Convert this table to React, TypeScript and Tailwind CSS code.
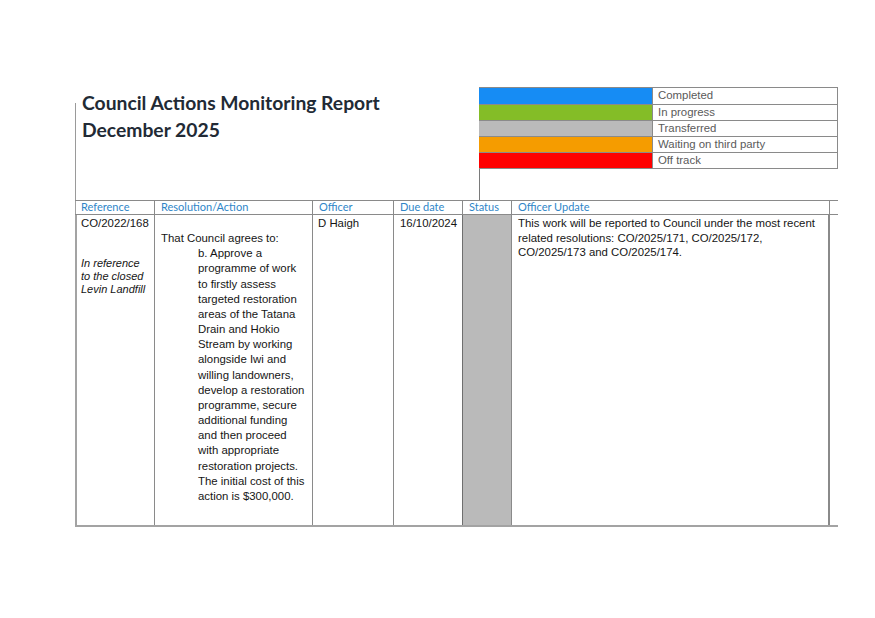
import React from 'react';

const legend = [
  { label: 'Completed', color: 'bg-[#168cf4]' },
  { label: 'In progress', color: 'bg-[#84bd27]' },
  { label: 'Transferred', color: 'bg-[#bababa]' },
  { label: 'Waiting on third party', color: 'bg-[#f59c00]' },
  { label: 'Off track', color: 'bg-[#ff0000]' },
];

const actionLines = [
  'b. Approve a',
  'programme of work',
  'to firstly assess',
  'targeted restoration',
  'areas of the Tatana',
  'Drain and Hokio',
  'Stream by working',
  'alongside Iwi and',
  'willing landowners,',
  'develop a restoration',
  'programme, secure',
  'additional funding',
  'and then proceed',
  'with appropriate',
  'restoration projects.',
  'The initial cost of this',
  'action is $300,000.',
];

const headers = ['Reference', 'Resolution/Action', 'Officer', 'Due date', 'Status', 'Officer Update'];

const heading = "font-['Lato',sans-serif]";
const body = "font-['Liberation_Sans',Arial,sans-serif]";

export default function App() {
  return (
    <div className="w-[875px] h-[618px] bg-white overflow-hidden">
      <div className="pt-[87px] pl-[75px]">
        {/* top area: title + legend */}
        <div className="flex h-[113px]">
          <div className="w-[404px] mt-[16px] border-l border-[#9a9a9a]">
            <h1 className={`${heading} -mt-[14px] pl-[6px] text-[19.3px] leading-[27px] font-bold text-[#222a35]`}>
              Council Actions Monitoring Report
              <br />
              December 2025
            </h1>
          </div>
          <div className="border-l border-[#7a7a7a]">
            <div className="w-[359px] border-t border-r border-b border-[#8a8a8a] -ml-px">
              {legend.map((l, i) => (
                <div key={l.label} className={`flex h-[16px] ${i > 0 ? 'border-t border-[#8a8a8a]' : ''}`}>
                  <div className={`w-[173px] ${l.color}`} />
                  <div className={`${body} flex-1 border-l border-[#8a8a8a] pl-[5px] text-[11.4px] leading-[15px] text-[#5a5a5a]`}>
                    {l.label}
                  </div>
                </div>
              ))}
            </div>
          </div>
        </div>

        {/* actions table */}
        <div className="w-[763px] border-t border-[#8a8a8a]">
          <div className="grid grid-cols-[79px_158px_81px_69px_49px_319px] border-b border-[#8a8a8a]">
            {headers.map((h, i) => (
              <div
                key={h}
                className={`${heading} h-[13px] border-l border-[#8a8a8a] ${i === 0 ? 'pl-[5px] border-[#a0a0a0]' : 'pl-[6px]'} ${i === 5 ? 'border-r' : ''} text-[11px] leading-[12px] text-[#2f86c8]`}
              >
                {h}
              </div>
            ))}
          </div>
          <div className={`${body} grid grid-cols-[79px_158px_81px_69px_49px_319px] h-[312px] border-b-2 border-[#a3a3a3] text-[11.4px] text-[#151515]`}>
            <div className="border-l-2 border-[#a3a3a3] pl-[4px] pt-px leading-[15px]">
              <div>CO/2022/168</div>
              <div className="mt-[26px] italic text-[11px] leading-[13px]">
                In reference
                <br />
                to the closed
                <br />
                Levin Landfill
              </div>
            </div>
            <div className="border-l border-[#8a8a8a] pl-[6px] pt-px leading-[15.15px]">
              <div>&nbsp;</div>
              <div>That Council agrees to:</div>
              <div className="pl-[37px]">
                {actionLines.map((t) => (
                  <div key={t}>{t}</div>
                ))}
              </div>
            </div>
            <div className="border-l border-[#8a8a8a] pl-[5px] pt-px leading-[15px]">D Haigh</div>
            <div className="border-l border-[#8a8a8a] pl-[6px] pt-px leading-[15px]">16/10/2024</div>
            <div className="border-l border-[#6f6f6f] bg-[#bababa]" />
            <div className="border-l border-r-2 border-[#8a8a8a] pl-[6px] pt-px leading-[14.6px]">
              This work will be reported to Council under the most recent
              <br />
              related resolutions: CO/2025/171, CO/2025/172,
              <br />
              CO/2025/173 and CO/2025/174.
            </div>
          </div>
        </div>
      </div>
    </div>
  );
}
